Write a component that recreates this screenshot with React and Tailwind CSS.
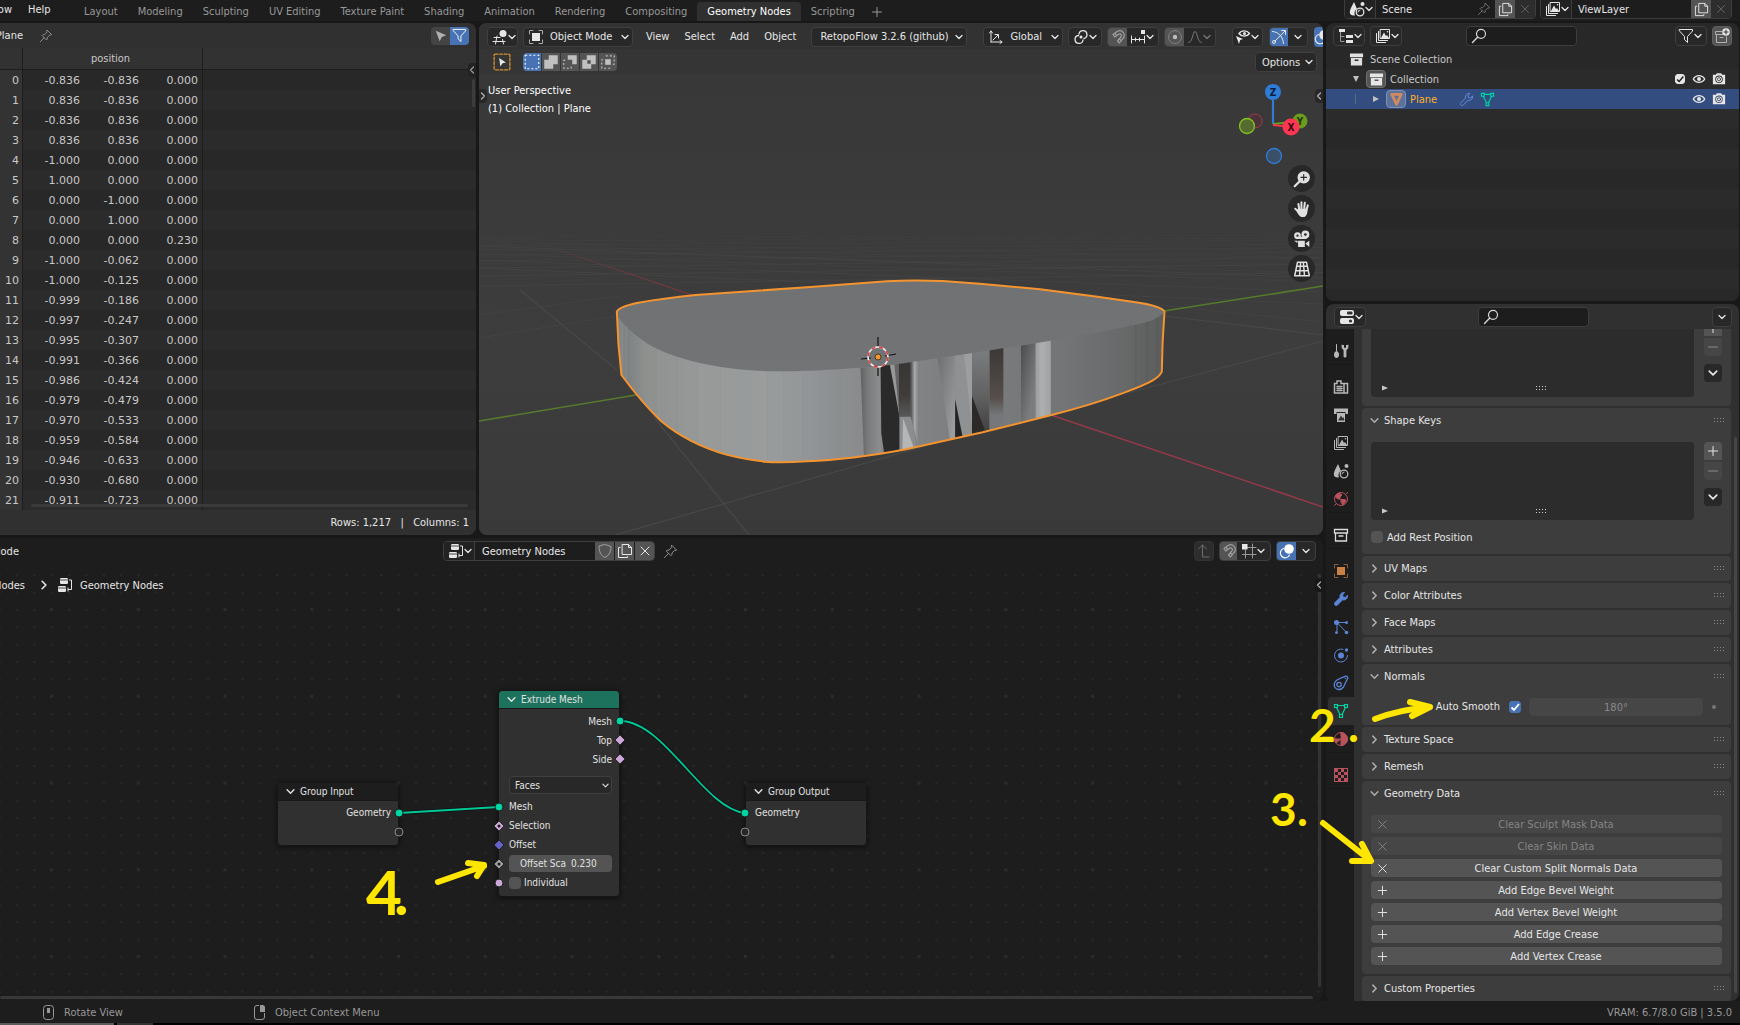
import React from "react";

const svgBase = {
  fill: "none",
  stroke: "currentColor",
  strokeLinecap: "round",
  strokeLinejoin: "round",
  viewBox: "0 0 16 16",
  "aria-hidden": true,
};

const Icon = ({ className = "h-4 w-4", children, ...rest }) => (
  <svg {...svgBase} {...rest} className={`shrink-0 ${className}`}>
    {children}
  </svg>
);

const Chevron = ({ className = "h-2 w-2" }) => (
  <svg {...svgBase} viewBox="0 0 8 8" strokeWidth="1.3" className={`shrink-0 ${className}`}>
    <path d="M1 2.5 4 5.5 7 2.5" />
  </svg>
);

const PinIcon = (props) => (
  <Icon {...props}>
    <path d="M9.5 1.5 14.5 6.5 13 7 12.5 6.8 9.5 9.5 9.5 11.5 8.5 12.5 3.5 7.5 4.5 6.5 6.5 6.5 9.2 3.5 9 3ZM6 10 1.5 14.5" />
  </Icon>
);

const FunnelIcon = (props) => (
  <Icon {...props}>
    <path d="M1.5 1.5H14.5V3L9.5 8.5V14.5L6.5 11.5V8.5L1.5 3Z" />
  </Icon>
);

const CopyIcon = (props) => (
  <Icon {...props} strokeLinejoin="miter">
    <path d="M5.5 1.5H11.5L14.5 4.5V11.5H5.5ZM11.5 1.5V4.5H14.5M3 4.5H1.5V14.5H10.5V13.5" />
  </Icon>
);

const CloseIcon = (props) => (
  <Icon {...props}>
    <path d="M4 4 12 12M12 4 4 12" />
  </Icon>
);

const PlusIcon = (props) => (
  <Icon {...props}>
    <path d="M8 3.5V12.5M3.5 8H12.5" />
  </Icon>
);

const MagnetIcon = (props) => (
  <Icon {...props} strokeWidth="1.2">
    <path d="M3 5.5 7.5 2.2C13 0 16.5 6.5 12.5 10L9.5 14 7.5 12 10.5 8.5C12.5 6 10.5 4 8.5 5.2L4.8 8ZM9.5 9.8 11.3 11.8M4.8 4.2 6.5 6.5" />
  </Icon>
);

const ImagesIcon = (props) => (
  <Icon {...props} strokeLinejoin="miter">
    <path d="M5.5 1.5H14.5V10.5H5.5ZM3.5 3.5V12.5H12.5M1.5 5.5V14.5H10.5" />
    <path d="M6 10 9 4.5 11 8 12 7 14 10Z" fill="currentColor" stroke="none" />
    <circle cx="12.5" cy="3.8" r=".8" fill="currentColor" stroke="none" />
  </Icon>
);

const SceneIcon = (props) => (
  <Icon {...props} stroke="none" fill="currentColor">
    <path d="M5 1C3.5 4 1 8 .8 11 .5 14 4 15 6 14.3 4.8 11.5 6 9 8 8Z" />
    <circle cx="13.5" cy="3" r="2" />
    <circle cx="11" cy="11" r="3.8" fill="none" stroke="currentColor" strokeWidth="1.3" />
    <path d="M9 11A2.2 2.2 0 0 1 11 9" fill="none" stroke="currentColor" />
  </Icon>
);

const BoxIcon = ({ solid, ...props }) =>
  solid ? (
    <Icon {...props} stroke="none" fill="currentColor">
      <path d="M1 1.5H15V5.5H1ZM2 6.5H14V14.5H2ZM6 8V9.5H10V8Z" fillRule="evenodd" />
    </Icon>
  ) : (
    <Icon {...props} strokeLinejoin="miter" strokeWidth="1.3">
      <path d="M1.5 2.5H14.5V6H1.5ZM2.5 6V14H13.5V6M6 9H10" />
    </Icon>
  );

const SearchIcon = (props) => (
  <Icon {...props}>
    <circle cx="10" cy="5.8" r="4.5" strokeWidth="1.2" />
    <path d="M6.8 9 1.5 14.5" strokeWidth="1.4" />
  </Icon>
);

const NodeTreeIcon = (props) => (
  <Icon {...props} stroke="none" fill="currentColor">
    <rect x="3" y="1" width="8" height="6" rx="1.2" />
    <rect x="1" y="9" width="8" height="6" rx="1.2" />
    <path d="M3 3H11M1 11H9" stroke="#222" strokeWidth=".8" />
    <path d="M12.5 3H14.5V12.5H11.5M11 11V14" fill="none" stroke="currentColor" />
  </Icon>
);

const MeshIcon = (props) => (
  <Icon {...props} strokeLinejoin="miter" strokeWidth="1.2">
    <path d="M1.5 1.5H4.5V4.5H1.5ZM11.5 1.5H14.5V4.5H11.5ZM6.5 11.5H9.5V14.5H6.5ZM4.5 2.5H11.5M3.5 4.5 7 11.5M12.5 4.5 9 11.5" />
  </Icon>
);

const WrenchIcon = ({ solid, ...props }) => (
  <Icon {...props} fill={solid ? "currentColor" : "none"}>
    <path d="M14.5 4.5C15 8 12 9.5 9.5 8.8L4.5 14C2.5 15.5 .5 13.5 2 11.5L7 6.5C6.5 3.5 8.5 1 11.5 1.5L9.5 4 10 6 12 6.5Z" />
  </Icon>
);

const EyeIcon = (props) => (
  <Icon {...props} strokeWidth="1.6">
    <path d="M1.5 8C4.5 2.8 11.5 2.8 14.5 8 11.5 13.2 4.5 13.2 1.5 8Z" />
    <circle cx="8" cy="8" r="2.3" fill="currentColor" stroke="none" />
  </Icon>
);

const CameraIcon = (props) => (
  <Icon {...props} stroke="none" fill="currentColor">
    <path
      fillRule="evenodd"
      d="M1 3H4.5L5.5 1.5H10.5L11.5 3H15V14H1ZM8 4A4.3 4.3 0 1 0 8 12.6 4.3 4.3 0 1 0 8 4Z"
    />
    <circle cx="8" cy="8.3" r="3.3" />
    <circle cx="8" cy="8.3" r="1.8" fill="none" stroke="#222" strokeWidth=".8" />
  </Icon>
);

const OverlayIcon = (props) => (
  <Icon {...props}>
    <circle cx="10" cy="6" r="4.8" fill="currentColor" stroke="none" />
    <path d="M4.5 5.5A4.8 4.8 0 1 0 10.5 12" strokeWidth="1.2" />
  </Icon>
);

const ObjectIcon = ({ frame = "currentColor", ...props }) => (
  <Icon {...props} strokeLinejoin="miter">
    <rect x="4" y="4" width="8" height="8" fill="currentColor" stroke="none" />
    <path d="M1.5 5V1.5H5M11 1.5H14.5V5M14.5 11V14.5H11M5 14.5H1.5V11" stroke={frame} />
  </Icon>
);

const Grip = ({ className = "text-[#999999]" }) => (
  <svg viewBox="0 0 11 5" className={`h-[5px] w-[11px] shrink-0 ${className}`} fill="currentColor" aria-hidden>
    {[0, 3, 6, 9].map((x) => (
      <React.Fragment key={x}>
        <rect x={x} y="0" width="1" height="1" />
        <rect x={x} y="3" width="1" height="1" />
      </React.Fragment>
    ))}
  </svg>
);

const boxClass = "flex h-5 shrink-0 items-center rounded border border-[#3f3f3f] bg-[#282828] text-[#e6e6e6]";

const MenuButton = ({ label, className = "w-8", children }) => (
  <button aria-label={label} className={`${boxClass} justify-between pr-1 pl-2 ${className}`}>
    {children}
    <Chevron />
  </button>
);

const Dropdown = ({ label, value, icon, className }) => (
  <div className={`${boxClass} pr-[3px] pl-1 ${className}`}>
    {icon}
    <select aria-label={label} className="min-w-0 flex-1 cursor-pointer appearance-none bg-transparent pl-[6px] outline-none">
      <option>{value}</option>
    </select>
    <Chevron />
  </div>
);

const SearchBox = ({ label }) => (
  <div className="flex h-5 w-[111px] items-center rounded border border-[#3d3d3d] bg-[#1d1d1d] pl-1 text-[#d6d6d6]">
    <SearchIcon />
    <input aria-label={label} className="min-w-0 flex-1 bg-transparent outline-none" />
  </div>
);

const Checkbox = ({ label, checked = false, id, className = "h-3 w-3 text-white" }) => (
  <span className={`relative flex rounded-sm ${className}`}>
    <input
      id={id}
      type="checkbox"
      defaultChecked={checked}
      aria-label={label}
      className="peer h-full w-full appearance-none rounded-sm bg-[#545454] checked:bg-inherit"
    />
    <svg viewBox="0 0 12 12" className="pointer-events-none absolute inset-0 hidden h-full w-full peer-checked:block" aria-hidden>
      <path d="M2.5 6.5 5 9 10 3" fill="none" stroke="currentColor" strokeWidth="1.8" />
    </svg>
  </span>
);

const TABS = [
  "Layout",
  "Modeling",
  "Sculpting",
  "UV Editing",
  "Texture Paint",
  "Shading",
  "Animation",
  "Rendering",
  "Compositing",
  "Geometry Nodes",
  "Scripting",
];

const DataBlock = ({ name, icon, pin }) => (
  <div className="flex h-5 w-48 overflow-hidden rounded-b border border-[#3d3d3d] text-[#e6e6e6]">
    <button aria-label={`Browse ${name}`} className="flex w-[31px] items-center justify-between border-r border-[#3d3d3d] bg-[#222222] pr-[2px] pl-1">
      {icon}
      <Chevron />
    </button>
    <input aria-label={name} defaultValue={name} className="min-w-0 flex-1 bg-transparent pl-[6px] outline-none" />
    {pin && <PinIcon className="mr-1 h-[14px] w-[14px] self-center text-[#777777]" />}
    <button aria-label={`New ${name}`} className="flex w-5 items-center justify-center bg-[#545454]">
      <CopyIcon className="h-[15px] w-[15px]" />
    </button>
    <button aria-label={`Remove ${name}`} className="flex w-5 items-center justify-center bg-[#2d2d2d] text-[#686868]">
      <CloseIcon className="h-[14px] w-[14px]" />
    </button>
  </div>
);

const TopBar = () => (
  <header className="flex h-[23px] shrink-0 items-start overflow-hidden border-b-2 border-[#181818] bg-[#1d1d1d] text-[#e6e6e6]">
    <div className="flex h-[18px] w-[12px] items-center justify-end overflow-hidden">
      <button>Window</button>
    </div>
    <button className="ml-4 h-[18px] w-[46px] text-left">Help</button>
    <nav className="flex pt-[2px] text-[#989898]">
      {TABS.map((tab) => (
        <button
          key={tab}
          className={
            tab === "Geometry Nodes"
              ? "h-[19px] rounded-t bg-[#303030] px-[10px] text-white"
              : "h-[19px] px-[10px]"
          }
        >
          {tab}
        </button>
      ))}
      <button aria-label="Add workspace" className="px-1">
        <PlusIcon />
      </button>
    </nav>
    <div className="-mt-px mr-2 ml-auto flex shrink-0 gap-1">
      <DataBlock name="Scene" icon={<SceneIcon />} pin />
      <DataBlock name="ViewLayer" icon={<ImagesIcon />} />
    </div>
  </header>
);

const ROWS = [
  ["-0.836", "-0.836", "0.000"],
  ["0.836", "-0.836", "0.000"],
  ["-0.836", "0.836", "0.000"],
  ["0.836", "0.836", "0.000"],
  ["-1.000", "0.000", "0.000"],
  ["1.000", "0.000", "0.000"],
  ["0.000", "-1.000", "0.000"],
  ["0.000", "1.000", "0.000"],
  ["0.000", "0.000", "0.230"],
  ["-1.000", "-0.062", "0.000"],
  ["-1.000", "-0.125", "0.000"],
  ["-0.999", "-0.186", "0.000"],
  ["-0.997", "-0.247", "0.000"],
  ["-0.995", "-0.307", "0.000"],
  ["-0.991", "-0.366", "0.000"],
  ["-0.986", "-0.424", "0.000"],
  ["-0.979", "-0.479", "0.000"],
  ["-0.970", "-0.533", "0.000"],
  ["-0.959", "-0.584", "0.000"],
  ["-0.946", "-0.633", "0.000"],
  ["-0.930", "-0.680", "0.000"],
  ["-0.911", "-0.723", "0.000"],
];

const Spreadsheet = () => (
  <section className="relative flex w-[476px] shrink-0 flex-col overflow-hidden rounded-r-lg bg-[#282828] text-[#c8c8c8]">
    <div className="flex h-[25px] shrink-0 items-center bg-[#303030] pr-[7px]">
      <div className="flex w-[23px] justify-end overflow-hidden text-[#e6e6e6]">
        <span>Plane</span>
      </div>
      <PinIcon className="ml-4 h-[14px] w-[14px] text-[#999999]" />
      <div className="ml-auto flex overflow-hidden rounded">
        <button aria-label="Show only selected" className="flex h-[18px] w-[19px] items-center justify-center bg-[#444444] text-[#b0b0b0]">
          <Icon className="h-[14px] w-[14px]">
            <path d="M2 2 14 7 9 9 6.5 14Z" fill="currentColor" stroke="none" />
          </Icon>
        </button>
        <button aria-label="Use filter" className="flex h-[18px] w-[19px] items-center justify-center bg-[#4772b3] text-white">
          <FunnelIcon className="h-[15px] w-[15px]" />
        </button>
      </div>
    </div>
    <div className="min-h-0 flex-1 overflow-hidden">
      <table className="w-full table-fixed border-separate border-spacing-0">
        <colgroup>
          <col className="w-[23px]" />
          <col className="w-[62px]" />
          <col className="w-[59px]" />
          <col className="w-[59px]" />
          <col />
        </colgroup>
        <thead>
          <tr className="h-[22px] bg-[#323232]">
            <th className="border-r border-b border-[#1d1d1d] p-0" />
            <th colSpan={3} className="border-r border-b border-[#1d1d1d] p-0 pr-1 font-normal">
              position
            </th>
            <th className="border-b border-[#1d1d1d] p-0" />
          </tr>
        </thead>
        <tbody className="text-right font-['DejaVu_Sans',sans-serif]">
          {ROWS.map((row, i) => (
            <tr key={i} className="h-5 even:bg-[#2b2b2b]">
              <td className="border-r border-[#1d1d1d] bg-[#333333] pt-px pr-[3px]">{i}</td>
              <td className="pt-px pr-[5px]">{row[0]}</td>
              <td className="pt-px pr-[5px]">{row[1]}</td>
              <td className="border-r border-[#1d1d1d] pt-px pr-1">{row[2]}</td>
              <td />
            </tr>
          ))}
        </tbody>
      </table>
    </div>
    <div className="flex h-[25px] shrink-0 items-center justify-end bg-[#303030] pr-[7px] whitespace-pre text-[#e6e6e6]">
      Rows: 1,217   |   Columns: 1
    </div>
    <div className="absolute right-2 bottom-7 left-[31px] h-[3px] rounded bg-[#3a3a3a]" />
    <div className="absolute top-14 right-[1px] h-7 w-[3px] rounded bg-[#3c3c3c]" />
    <button aria-label="Show region" className="absolute top-10 right-0 flex h-[14px] w-2 items-center justify-center rounded-l bg-[#222222] text-[#999999]">
      <Chevron className="h-2 w-2 rotate-90" />
    </button>
  </section>
);

const OUTLINE =
  "M44 155C48 142 70 135 100 128 150 118 200 111 250 105L400 93 550 81 750 64C790 61 850 61 895 63L1000 72 1150 88 1300 110 1400 127C1440 134 1470 144 1475 155L1470 250 1468 335C1460 355 1440 368 1370 398 1310 424 1240 448 1180 465L1000 517 800 568C740 581 640 600 540 604 500 607 460 608 430 605 395 601 360 593 330 584 250 558 200 522 160 484 120 440 85 390 56 345L48 250Z";
const SIDE =
  "M44 168C70 205 100 235 140 262 180 285 240 308 320 322 370 330 410 333 450 334 520 335 600 331 730 319 800 310 900 293 1100 257L1250 228C1330 212 1400 195 1440 182 1460 172 1470 162 1475 155L1475 640H40Z";

const HORIZON = [233, 236, 239, 242, 246, 250, 255, 261, 268, 277];

const Scene3D = () => (
  <svg
    viewBox="479 23 844 512"
    preserveAspectRatio="xMidYMid slice"
    className="absolute inset-0 h-full w-full"
    aria-hidden
  >
    <defs>
      <linearGradient id="top" x1="0" y1="0" x2="0" y2="1">
        <stop offset="0" stopColor="#6f7172" />
        <stop offset="1" stopColor="#747677" />
      </linearGradient>
      <linearGradient id="side" gradientUnits="userSpaceOnUse" x1="44" y1="0" x2="1475" y2="0">
        <stop offset="0" stopColor="#858888" />
        <stop offset=".02" stopColor="#7f8282" />
        <stop offset=".05" stopColor="#8d908e" />
        <stop offset=".15" stopColor="#979a99" />
        <stop offset=".27" stopColor="#9a9d9c" />
        <stop offset=".34" stopColor="#949698" />
        <stop offset=".44" stopColor="#898b8d" />
        <stop offset=".6" stopColor="#7d7f81" />
        <stop offset=".82" stopColor="#737476" />
        <stop offset=".93" stopColor="#676868" />
        <stop offset="1" stopColor="#5c5d5d" />
      </linearGradient>
      <linearGradient id="f1">
        <stop offset="0" stopColor="#5f6060" />
        <stop offset=".4" stopColor="#7b7c7c" />
        <stop offset="1" stopColor="#8c8e90" />
      </linearGradient>
      <linearGradient id="f2" x1="0" y1="0" x2="0" y2="1">
        <stop offset="0" stopColor="#383634" />
        <stop offset=".6" stopColor="#3f3c3a" />
        <stop offset="1" stopColor="#5a5a5a" />
      </linearGradient>
      <linearGradient id="f3">
        <stop offset="0" stopColor="#4c4c4c" />
        <stop offset=".5" stopColor="#a8a9ab" />
        <stop offset="1" stopColor="#808284" />
      </linearGradient>
      <linearGradient id="f4" x1="0" y1="0" x2="0" y2="1">
        <stop offset="0" stopColor="#7c7e80" />
        <stop offset=".5" stopColor="#626363" />
        <stop offset="1" stopColor="#3c3938" />
      </linearGradient>
      <linearGradient id="f5" x1="0" y1="0" x2="0" y2="1">
        <stop offset="0" stopColor="#3a3633" />
        <stop offset=".6" stopColor="#554e4b" />
        <stop offset=".8" stopColor="#75777a" />
      </linearGradient>
      <linearGradient id="f6">
        <stop offset="0" stopColor="#9a9c9e" />
        <stop offset=".4" stopColor="#adafb1" />
        <stop offset="1" stopColor="#9fa1a3" />
      </linearGradient>
      <linearGradient id="f7" x1="0" y1="0" x2="1" y2="1">
        <stop offset="0" stopColor="#6b6d6f" />
        <stop offset=".6" stopColor="#8b8d8f" />
        <stop offset="1" stopColor="#a2a4a6" />
      </linearGradient>
      <linearGradient id="f8" x1="0" y1="0" x2=".8" y2="1">
        <stop offset="0" stopColor="#484949" />
        <stop offset=".8" stopColor="#7a7c7e" />
      </linearGradient>
      <linearGradient id="fade" gradientUnits="userSpaceOnUse" x1="530" y1="0" x2="692" y2="0">
        <stop offset="0" stopColor="#83363f" stopOpacity="0" />
        <stop offset="1" stopColor="#83363f" />
      </linearGradient>
      <linearGradient id="sky" x1="0" y1="0" x2="0" y2="1">
        <stop offset="0" stopColor="#373737" />
        <stop offset=".5" stopColor="#3d3d3d" />
        <stop offset="1" stopColor="#363636" />
      </linearGradient>
      <clipPath id="body">
        <path d={OUTLINE} />
      </clipPath>
      <clipPath id="wall">
        <path d={SIDE} />
      </clipPath>
    </defs>
    <rect x="0" y="0" width="1900" height="700" fill="url(#sky)" />
    <g stroke="#484848" fill="none">
      {HORIZON.map((y, i) => (
        <path key={y} d={`M479 ${y + i}L1323 ${y - i / 2}`} opacity={0.15 + i * 0.05} />
      ))}
      {HORIZON.map((y, i) => (
        <path key={y} d={`M479 ${y - i}L1323 ${y + i * 3}`} opacity={0.1 + i * 0.05} />
      ))}
      <path d="M479 315 620 296M479 338 640 312M479 246 1323 278M1110 300 1323 322" opacity=".6" />
      <path d="M520 290 617 370M653 416 749 535M615 535 925 446M1128 393 1323 341M1164 316 1323 335" strokeWidth="1.2" />
    </g>
    <path d="M530 240 692 295" stroke="url(#fade)" strokeWidth="1.2" />
    <path d="M1051 415 1323 507" stroke="#93394a" strokeWidth="1.6" />
    <path d="M479 421 636 395M1164 311 1323 286" stroke="#567a2c" strokeWidth="1.6" />

    <g transform="translate(600 260) scale(.3827 .3333)">
      <g clipPath="url(#body)">
        <rect width="1568" height="660" fill="url(#top)" />
        <g clipPath="url(#wall)">
          <rect width="1568" height="660" fill="url(#side)" />
          <path d="M58 150V400M69 150V400M155 250V520" stroke="#a0a3a2" strokeWidth="3" opacity=".3" />
          <path d="M200 250V600M255 250V600M315 250V600M438 250V620M480 250V620M530 250V620M576 250V620M630 250V620" stroke="#868889" strokeWidth="1.5" opacity=".35" />
          <path d="M680 300H733V600H690Z" fill="url(#f1)" />
          <path d="M733 300H783V600H745L735 520Z" fill="#2a2a2a" />
          <path d="M755 300H781L782 465Z" fill="#96989a" />
          <path d="M768 300H781L782 465Z" fill="#636465" />
          <path d="M781 300H812V475H781Z" fill="url(#f2)" />
          <path d="M783 470H814L832 600H783Z" fill="#8b8d8f" />
          <path d="M792 475 822 570H790Z" fill="#b4b6b8" />
          <path d="M812 300H832V560L812 470Z" fill="url(#f3)" />
          <path d="M880 280H928V560L915 545Z" fill="url(#f7)" />
          <path d="M928 270H972V540H928Z" fill="#8f9193" />
          <path d="M950 270H972V500Z" fill="#9c9ea0" />
          <path d="M928 418 950 545H928Z" fill="#242424" />
          <path d="M972 260H1018V540H972Z" fill="url(#f4)" />
          <path d="M972 408 1012 530H972Z" fill="#2c2a29" />
          <path d="M1018 250H1054V520H1018Z" fill="url(#f5)" />
          <path d="M1100 230H1138V500H1100Z" fill="url(#f8)" />
          <path d="M1138 230H1178V490H1138Z" fill="url(#f6)" />
          <path d="M1400 150V420M1430 150V420M1455 150V420" stroke="#4f5050" strokeWidth="4" opacity=".3" />
        </g>
      </g>
      <path d={OUTLINE} fill="none" stroke="#f49430" strokeWidth="2" vectorEffect="non-scaling-stroke" />
    </g>

    <path d="M878 337V347M878 367V376M861 359 871 358M885 356 896 354" stroke="#111" strokeWidth="1.2" />
    <circle cx="878" cy="357" r="10" fill="none" stroke="#f2f2f2" strokeWidth="1.5" />
    <circle cx="878" cy="357" r="10" fill="none" stroke="#d9363e" strokeWidth="1.5" strokeDasharray="4 4" />
    <circle cx="878" cy="357" r="3" fill="#f49430" stroke="#3a2a10" strokeWidth=".8" />
  </svg>
);

const AxisGizmo = () => (
  <svg viewBox="0 0 72 84" className="h-[84px] w-[72px] font-bold" fontSize="10" textAnchor="middle" aria-hidden>
    <path d="M36 16V40" stroke="#2f7cd8" strokeWidth="2.2" />
    <path d="M36 40 56 38" stroke="#6b9c1b" strokeWidth="2" />
    <path d="M36 41 54 43" stroke="#f2364f" strokeWidth="2" />
    <circle cx="18" cy="37" r="7" fill="#4a3338" stroke="#a03a4c" />
    <circle cx="10" cy="42" r="7.5" fill="#556b2f" stroke="#83c21d" strokeWidth="1.3" />
    <circle cx="63" cy="37" r="7.5" fill="#6b9c1b" />
    <text x="63" y="41" fill="#26380a">Y</text>
    <circle cx="54" cy="43" r="8.5" fill="#ff3653" />
    <text x="54" y="47" fill="#3a0a12">X</text>
    <circle cx="36" cy="8" r="8" fill="#2f7cd8" />
    <text x="36" y="12" fill="#0c2138">Z</text>
    <circle cx="37" cy="72" r="7.5" fill="#395068" stroke="#2f7cd8" strokeWidth="1.3" />
  </svg>
);

const NavButton = ({ label, children }) => (
  <button aria-label={label} className="flex h-[27px] w-[27px] items-center justify-center rounded-full bg-[#282828] text-[#e0e0e0]">
    {children}
  </button>
);

const Viewport = () => (
  <section className="relative min-w-0 flex-1 overflow-hidden rounded-lg bg-[#3a3a3a] text-[#e6e6e6]">
    <Scene3D />
    <div className="relative flex h-[26px] items-center overflow-hidden bg-[#303030]/70 pt-px pl-2">
      <MenuButton label="Editor type" className="w-[31px] !pl-1">
        <Icon>
          <path d="M2 8.5H8M1 12.5H13M5 7 3.5 15M10.5 10.5 11.5 15" />
          <circle cx="11" cy="4.5" r="3.5" fill="currentColor" stroke="none" />
        </Icon>
      </MenuButton>
      <Dropdown label="Mode" value="Object Mode" icon={<ObjectIcon frame="#aaaaaa" />} className="ml-[5px] w-[110px]" />
      <nav className="ml-[13px] flex gap-[15px]">
        <button>View</button>
        <button>Select</button>
        <button>Add</button>
        <button>Object</button>
      </nav>
      <Dropdown label="RetopoFlow" value="RetopoFlow 3.2.6 (github)" className="ml-[15px] w-[156px] !pl-[2px]" />
      <Dropdown
        label="Transform orientation"
        value="Global"
        className="ml-4 w-20"
        icon={
          <Icon>
            <path d="M3 13V2M1.5 4 3 2 4.5 4M3 13H14M12 11.5 14 13 12 14.5M5 11 10 6M7 5.5H10.5V9" />
          </Icon>
        }
      />
      <MenuButton label="Pivot point" className="ml-[5px] !pl-1">
        <Icon>
          <circle cx="8" cy="8" r="1.5" fill="currentColor" stroke="none" />
          <path d="M6 5A4 4 0 1 1 11 9.5M5.5 6.5A4 4 0 1 0 10 11" strokeWidth="1.3" />
        </Icon>
      </MenuButton>
      <div className={`${boxClass} ml-[5px] w-[52px] overflow-hidden`}>
        <button aria-label="Snap" className="flex h-full w-[19px] items-center justify-center bg-[#545454] text-[#a0a0a0]">
          <MagnetIcon />
        </button>
        <button aria-label="Snapping" className="flex flex-1 items-center justify-between pr-1 pl-[3px]">
          <Icon className="h-4 w-4">
            <path d="M1.5 7V14M14.5 7V14M5.5 9V12M9.5 9V12M1.5 10.5H14.5" />
            <rect x="11" y="1" width="4" height="4" fill="currentColor" stroke="none" />
          </Icon>
          <Chevron />
        </button>
      </div>
      <div className={`${boxClass} ml-[5px] w-[52px] overflow-hidden text-[#808080]`}>
        <button aria-label="Proportional editing" className="flex h-full w-[19px] items-center justify-center bg-[#545454]">
          <Icon>
            <circle cx="8" cy="8" r="6.5" stroke="#808080" />
            <circle cx="8" cy="8" r="2.2" fill="#bbbbbb" stroke="none" />
          </Icon>
        </button>
        <button aria-label="Falloff" className="flex flex-1 items-center justify-between pr-1 pl-[3px] text-[#777777]">
          <Icon>
            <path d="M1.5 13.5C6 13.5 5.5 2.5 8 2.5S10 13.5 14.5 13.5" />
          </Icon>
          <Chevron />
        </button>
      </div>
      <div className="min-w-0 flex-1" />
      <MenuButton label="Visibility" className="w-[31px] !pl-[2px]">
        <Icon>
          <path d="M4 4.5C6.5 1 12 1 14.5 4.5 12 8 6.5 8 4 4.5Z" strokeWidth="1.4" />
          <circle cx="9.5" cy="4.5" r="1.5" fill="currentColor" stroke="none" />
          <path d="M1 7 8 10 5.2 11 4 15Z" fill="currentColor" stroke="none" />
        </Icon>
      </MenuButton>
      <div className={`${boxClass} ml-[6px] w-[39px] overflow-hidden`}>
        <button aria-label="Show gizmo" className="flex h-full w-[18px] items-center justify-center bg-[#4772b3]">
          <Icon>
            <path d="M1.5 2.5C8 3 12 8 12.5 14.5M3 13 14 2M10.5 1.5H14.5V5.5" />
            <circle cx="3" cy="13" r="1.5" fill="#4772b3" />
          </Icon>
        </button>
        <button aria-label="Gizmos" className="flex flex-1 justify-center">
          <Chevron />
        </button>
      </div>
      <button aria-label="Show overlays" className="ml-[6px] flex h-5 w-[9px] shrink-0 items-center overflow-hidden rounded-l bg-[#4772b3]">
        <OverlayIcon />
      </button>
    </div>
    <div className="relative flex h-[26px] items-center bg-[#303030]/30 pr-[6px] pl-[14px]">
      <button aria-label="Select tool">
        <Icon className="h-[18px] w-[18px]">
          <rect x="1" y="1" width="14" height="14" rx="1" stroke="#d09030" strokeWidth="1.2" strokeDasharray="2.5 1.5" />
          <path d="M5.5 4.5 11.5 8.5 8.5 9.2 6.5 12Z" fill="currentColor" stroke="none" />
        </Icon>
      </button>
      <div className="ml-3 flex gap-px overflow-hidden rounded text-[#c0c0c0]">
        <button aria-label="Set" className="flex h-[18px] w-[18px] items-center justify-center bg-[#4772b3]">
          <Icon className="h-[18px] w-[18px]">
            <rect x="2" y="2" width="12" height="12" stroke="#fff" strokeDasharray="1.8 1.8" strokeLinecap="butt" />
          </Icon>
        </button>
        <button aria-label="Extend" className="bg-[#545454]">
          <Icon className="h-[18px] w-[18px]" fill="currentColor" stroke="none">
            <path d="M6 2H14V10H10V14H2V6H6Z" />
          </Icon>
        </button>
        <button aria-label="Subtract" className="bg-[#545454]">
          <Icon className="h-[18px] w-[18px]">
            <path d="M6 2H14V10H10V6H6Z" fill="currentColor" stroke="none" />
            <path d="M9 12V13.5H2.5V6.5H4" strokeDasharray="1.8 1.8" strokeLinecap="butt" />
          </Icon>
        </button>
        <button aria-label="Invert" className="bg-[#545454]">
          <Icon className="h-[18px] w-[18px]" fill="currentColor" stroke="none">
            <path fillRule="evenodd" d="M6 2H14V10H10V14H2V6H6ZM6.5 6.5V9.5H9.5V6.5Z" />
          </Icon>
        </button>
        <button aria-label="Intersect" className="bg-[#545454]">
          <Icon className="h-[18px] w-[18px]">
            <rect x="5.5" y="5.5" width="5" height="5" fill="currentColor" stroke="none" />
            <path d="M6 2.5H13.5V10H12M10 13.5H2.5V6H4" strokeDasharray="1.8 1.8" strokeLinecap="butt" />
          </Icon>
        </button>
      </div>
      <Dropdown label="Options" value="Options" className="ml-auto w-[62px] !pl-0" />
    </div>
    <div className="relative pt-[7px] pl-[9px] text-white">
      <p className="h-[18px]">User Perspective</p>
      <p className="h-[18px]">(1) Collection | Plane</p>
    </div>
    <div className="absolute top-[61px] right-[14px]">
      <AxisGizmo />
    </div>
    <div className="absolute top-[142px] right-2 flex flex-col gap-[3px]">
      <NavButton label="Zoom">
        <Icon className="h-[18px] w-[18px]">
          <circle cx="9.5" cy="6.5" r="5.5" fill="currentColor" stroke="none" />
          <path d="M5.5 10.5 1.5 14.5" strokeWidth="2" />
          <path d="M9.5 4V9M7 6.5H12" stroke="#282828" />
        </Icon>
      </NavButton>
      <NavButton label="Pan">
        <Icon className="h-[18px] w-[18px]">
          <path d="M5.5 8 4.8 3.5M7.5 7V2M10 7 10.5 2.5M12 8.5 13.2 4.8M5 10.5 2 7.8" strokeWidth="1.8" />
          <path d="M4.5 7.5H13C13 11 12.5 15 9 15.2 6 15.4 4.5 12.5 3 9.5Z" fill="currentColor" stroke="none" />
        </Icon>
      </NavButton>
      <NavButton label="Camera view">
        <Icon className="h-[18px] w-[18px]" stroke="none" fill="currentColor">
          <circle cx="4" cy="5" r="3" />
          <circle cx="11" cy="4" r="3.5" />
          <path d="M3 6H12V8H3ZM4.5 9.5H10.5V15H4.5ZM11 12 14.5 9.5V15ZM1 9.5H4V11.5Z" />
          <circle cx="4" cy="5" r="1" fill="#282828" />
          <circle cx="11" cy="4" r="1.2" fill="#282828" />
        </Icon>
      </NavButton>
      <NavButton label="Perspective">
        <Icon className="h-[18px] w-[18px]" strokeWidth="1.3">
          <path d="M4 2H12L14.5 14H1.5ZM3.3 5.5H12.7M2.5 9.5H13.5M6.8 2 5.8 14M9.2 2 10.2 14" />
        </Icon>
      </NavButton>
    </div>
    <button aria-label="Show sidebar" className="absolute top-[66px] right-0 flex h-[14px] w-2 items-center justify-center rounded-l bg-[#282828] text-[#b0b0b0]">
      <Chevron className="h-2 w-2 rotate-90" />
    </button>
    <button aria-label="Show toolbar" className="absolute top-[66px] left-0 flex h-[14px] w-2 items-center justify-center rounded-r bg-[#282828] text-[#b0b0b0]">
      <Chevron className="h-2 w-2 -rotate-90" />
    </button>
  </section>
);

const NodeHeader = ({ title, className = "bg-[#1d1d1d]" }) => (
  <div className={`flex h-[18px] items-center gap-[5px] rounded-t border-b border-[#181818] pl-2 leading-4 ${className}`}>
    <Chevron className="h-[9px] w-[9px]" />
    {title}
  </div>
);

const nodeClass =
  "absolute w-[122px] rounded bg-[#303030] text-[10px] text-[#e0e0e0] shadow-[0_1px_5px_rgba(0,0,0,.6)] border border-[#161616]";

const Socket = ({ x, y, shape = "circle", color, hollow }) =>
  shape === "circle" ? (
    <circle cx={x} cy={y} r="4" fill={hollow ? "#262626" : color} stroke={hollow ? color : "#16201c"} />
  ) : (
    <g>
      <path d={`M${x} ${y - 5}L${x + 5} ${y}L${x} ${y + 5}L${x - 5} ${y}Z`} fill={color} stroke="#181818" strokeWidth=".8" />
      {hollow && <circle cx={x} cy={y} r="1.5" fill="#181818" />}
    </g>
  );

const NodeCanvas = () => (
  <>
    <svg className="absolute inset-0 h-full w-full" aria-hidden>
      <defs>
        <pattern id="dots" x="7" y="1.5" width="17.35" height="17.35" patternUnits="userSpaceOnUse">
          <rect x="9" y="0" width="2" height="2" fill="#292929" />
        </pattern>
        <pattern id="majorDots" x="50" y="69" width="86.75" height="86.75" patternUnits="userSpaceOnUse">
          <rect x="0" y="1" width="3" height="3" fill="#2b2b2b" />
        </pattern>
      </defs>
      <rect y="30" width="100%" height="100%" fill="url(#dots)" />
      <rect y="30" width="100%" height="100%" fill="url(#majorDots)" />
    </svg>
    <div className={`${nodeClass} top-[244px] left-[277px] h-[64px]`}>
      <NodeHeader title="Group Input" />
      <p className="pt-1 pr-[7px] text-right leading-4">Geometry</p>
    </div>
    <div className={`${nodeClass} top-[152px] left-[498px] h-[207px]`}>
      <NodeHeader title="Extrude Mesh" className="bg-[#1d725e]" />
      <div className="flex flex-col pt-[3px] pr-[7px] pl-[10px] leading-[19px]">
        <p className="text-right">Mesh</p>
        <p className="text-right">Top</p>
        <p className="text-right">Side</p>
        <div className="mt-[7px] mb-[3px] flex h-[18px] items-center rounded border border-[#3f3f3f] bg-[#282828] pr-[2px] pl-[5px]">
          <select aria-label="Extrude mode" className="min-w-0 flex-1 appearance-none bg-transparent outline-none">
            <option>Faces</option>
          </select>
          <Chevron className="h-[7px] w-[7px]" />
        </div>
        <p>Mesh</p>
        <p>Selection</p>
        <p>Offset</p>
        <div className="my-px flex h-[17px] items-center justify-center gap-[5px] rounded bg-[#545454]">
          <label htmlFor="offset-scale">Offset Sca</label>
          <input id="offset-scale" defaultValue="0.230" className="w-[30px] bg-transparent outline-none" />
        </div>
        <label className="flex items-center gap-[3px]">
          <input type="checkbox" className="h-3 w-3 appearance-none rounded-sm bg-[#545454]" />
          Individual
        </label>
      </div>
    </div>
    <div className={`${nodeClass} top-[244px] left-[745px] h-[64px]`}>
      <NodeHeader title="Group Output" />
      <p className="pt-1 pl-[9px] leading-4">Geometry</p>
    </div>
    <svg className="pointer-events-none absolute inset-0 h-full w-full" aria-hidden>
      <g fill="none">
        <path d="M399 275 499 269M621 183C665 184 704 271 745 275" stroke="#101010" strokeWidth="3.5" />
        <path d="M399 275 499 269M621 183C665 184 704 271 745 275" stroke="#00c896" strokeWidth="1.8" />
      </g>
      <Socket x={399} y={275} color="#00d6a3" />
      <Socket x={399} y={294} color="#8a8a8a" hollow />
      <Socket x={745} y={275} color="#00d6a3" />
      <Socket x={745} y={294} color="#8a8a8a" hollow />
      <Socket x={620} y={183} color="#00d6a3" />
      <Socket x={620} y={202} shape="diamond" color="#cca6d6" />
      <Socket x={620} y={221} shape="diamond" color="#cca6d6" />
      <Socket x={499} y={269} color="#00d6a3" />
      <Socket x={499} y={288} shape="diamond" color="#cca6d6" hollow />
      <Socket x={499} y={307} shape="diamond" color="#6363c7" />
      <Socket x={499} y={326} shape="diamond" color="#a1a1a1" hollow />
      <Socket x={499} y={345} color="#cca6d6" />
      <path
        d="M438 344 484 328M468 325 484 327 477 338"
        fill="none"
        stroke="#ffe600"
        strokeWidth="6"
        strokeLinecap="round"
        strokeLinejoin="round"
      />
      <text x="366" y="377" fontSize="62" fill="#ffe600" className="font-['Lato',sans-serif] font-bold">
        4<tspan x="394">.</tspan>
      </text>
    </svg>
  </>
);

const NodeEditor = () => (
  <section className="relative flex min-h-0 flex-[463] flex-col overflow-hidden rounded-r-lg bg-[#1d1d1d] text-[#e6e6e6]">
    <NodeCanvas />
    <div className="relative flex h-[26px] items-center pr-[7px]">
      <div className="flex w-[19px] justify-end overflow-hidden">
        <button>Node</button>
      </div>
      <div className="flex flex-1 items-center pl-[424px]">
        <div className={`${boxClass} w-[212px] overflow-hidden !bg-[#1d1d1d]`}>
          <button aria-label="Browse node tree" className="flex h-full w-[31px] items-center justify-between border-r border-[#3f3f3f] bg-[#222222] pr-[2px] pl-1">
            <NodeTreeIcon />
            <Chevron />
          </button>
          <input aria-label="Node tree name" defaultValue="Geometry Nodes" className="min-w-0 flex-1 bg-transparent pl-[7px] outline-none" />
          <div className="flex h-full gap-px">
            <button aria-label="Fake user" className="flex w-[19px] items-center justify-center bg-[#545454] text-[#a0a0a0]">
              <Icon>
                <path d="M8 1.5 14 3.5C14 9 12 12.5 8 14.5 4 12.5 2 9 2 3.5Z" />
              </Icon>
            </button>
            <button aria-label="Duplicate" className="flex w-[19px] items-center justify-center bg-[#545454]">
              <CopyIcon />
            </button>
            <button aria-label="Unlink" className="flex w-[19px] items-center justify-center bg-[#545454]">
              <CloseIcon />
            </button>
          </div>
        </div>
        <PinIcon className="ml-2 h-[15px] w-[15px] text-[#999999]" />
      </div>
      <button aria-label="Parent node tree" className="flex h-5 w-5 items-center justify-center rounded border border-[#333333] bg-[#2d2d2d] text-[#6c6c6c]">
        <Icon>
          <path d="M6.5 2V14H13M2.5 6 6.5 2 10.5 6" />
        </Icon>
      </button>
      <div className={`${boxClass} ml-[5px] w-[52px] overflow-hidden`}>
        <button aria-label="Snap" className="flex h-full w-[19px] items-center justify-center bg-[#545454] text-[#a0a0a0]">
          <MagnetIcon />
        </button>
        <button aria-label="Snap to" className="flex flex-1 items-center justify-between pr-[5px] pl-1">
          <Icon>
            <path d="M6 4.5H15M1.5 11.5H15M4.5 7V15M11.5 1V15" stroke="#999999" />
            <rect x="1" y="1" width="5.5" height="5.5" fill="currentColor" stroke="none" />
          </Icon>
          <Chevron />
        </button>
      </div>
      <div className={`${boxClass} ml-[5px] w-[40px] overflow-hidden`}>
        <button aria-label="Overlays" className="flex h-full w-[19px] items-center justify-center bg-[#4772b3] text-white">
          <OverlayIcon />
        </button>
        <button aria-label="Overlay options" className="flex flex-1 justify-center">
          <Chevron />
        </button>
      </div>
    </div>
    <div className="relative mt-[11px] flex h-5 items-center">
      <div className="flex w-[25px] justify-end overflow-hidden">
        <span>Nodes</span>
      </div>
      <Chevron className="mr-2 ml-[14px] h-[10px] w-[10px] -rotate-90" />
      <NodeTreeIcon className="mr-[7px] h-4 w-4" />
      <span>Geometry Nodes</span>
    </div>
    <div className="absolute top-9 right-[2px] bottom-[14px] w-[3px] rounded bg-[#333333]" />
    <div className="absolute right-[10px] bottom-[2px] left-0 h-[3px] rounded bg-[#383838]" />
    <button aria-label="Show sidebar" className="absolute top-10 right-0 flex h-[14px] w-2 items-center justify-center rounded-l bg-[#181818] text-[#b0b0b0]">
      <Chevron className="h-2 w-2 rotate-90" />
    </button>
  </section>
);

const Outliner = () => (
  <section className="flex h-[278px] shrink-0 flex-col overflow-hidden rounded-lg bg-[#282828] text-[#c8c8c8]">
    <div className="flex h-[26px] shrink-0 items-center pr-[7px] pl-[7px]">
      <MenuButton label="Editor type" className="w-8 !pl-1">
        <Icon>
          <path d="M2.5 4V13.5H6M2.5 8.5H6" stroke="#999999" />
          <path d="M1 1H7V4H1ZM8 7H15V10H8ZM8 12H15V15H8Z" fill="currentColor" stroke="none" />
        </Icon>
      </MenuButton>
      <MenuButton label="Display mode" className="ml-[5px] w-8 !pl-1">
        <ImagesIcon />
      </MenuButton>
      <div className="flex flex-1 justify-center pr-[34px]">
        <SearchBox label="Search outliner" />
      </div>
      <MenuButton label="Filter" className="w-8 !pl-[2px]">
        <FunnelIcon />
      </MenuButton>
      <button aria-label="New collection" className="ml-[5px] flex h-5 w-5 items-center justify-center rounded border border-[#606060] bg-[#545454] text-[#b0b0b0]">
        <Icon>
          <path d="M8 3.5H1.5V6.5H9M2.5 6.5V14.5H12.5V9M6 9.5H9" />
          <circle cx="12" cy="4" r="3.8" fill="#e6e6e6" stroke="none" />
          <path d="M12 2V6M10 4H14" stroke="#333" />
        </Icon>
      </button>
    </div>
    <ul className="flex-1 overflow-hidden bg-[repeating-linear-gradient(#282828_0_20px,#2b2b2b_20px_40px)]">
      <li className="flex h-5 items-center pl-[23px]">
        <BoxIcon solid className="mr-[6px] h-[15px] w-[15px] text-[#e0e0e0]" />
        Scene Collection
      </li>
      <li className="flex h-5 items-center pr-[13px] pl-[26px]">
        <svg viewBox="0 0 8 8" className="h-2 w-2" aria-hidden>
          <path d="M1 1H7L4 7Z" fill="#c0c0c0" />
        </svg>
        <span className="mr-1 ml-[6px] flex h-[18px] w-5 items-center justify-center rounded border border-[#707070] bg-[#545454]">
          <BoxIcon solid className="h-[15px] w-[15px] text-[#e6e6e6]" />
        </span>
        Collection
        <span className="ml-auto flex items-center gap-[6px] text-[#e6e6e6]">
          <Checkbox label="Include collection" checked className="mr-px h-[10px] w-[10px] bg-[#e6e6e6] text-[#222222]" />
          <button aria-label="Hide Collection">
            <EyeIcon className="h-[14px] w-[14px]" />
          </button>
          <button aria-label="Disable Collection in renders">
            <CameraIcon className="h-[14px] w-[14px]" />
          </button>
        </span>
      </li>
      <li className="flex h-5 items-center bg-[#334d80] pr-[13px] pl-[29px]">
        <span className="h-[10px] w-px bg-[#5a6a80]" />
        <svg viewBox="0 0 8 8" className="ml-4 h-2 w-2" aria-hidden>
          <path d="M1 1V7L7 4Z" fill="#c0c0c0" />
        </svg>
        <span className="mr-1 ml-[6px] flex h-[18px] w-5 items-center justify-center rounded border border-[#8090b0] bg-[#5c719b] text-[#d08a5c]">
          <Icon className="h-[15px] w-[15px]" strokeWidth="3">
            <path d="M3 2.5H13L8 13Z" />
          </Icon>
        </span>
        <span className="text-[#ffaf29]">Plane</span>
        <WrenchIcon className="mr-[6px] ml-[22px] h-[15px] w-[15px] text-[#6a8fe0]" />
        <MeshIcon className="h-[15px] w-[15px] text-[#00d6a3]" />
        <span className="ml-auto flex items-center gap-[6px] text-[#e6e6e6]">
          <button aria-label="Hide Plane">
            <EyeIcon className="h-[14px] w-[14px]" />
          </button>
          <button aria-label="Disable Plane in renders">
            <CameraIcon className="h-[14px] w-[14px]" />
          </button>
        </span>
      </li>
    </ul>
  </section>
);

const PROP_TABS = [
  {
    name: "Tool",
    color: "text-[#b8b8b8]",
    end: true,
    icon: (
      <Icon>
        <path d="M3.5 1.5V8" />
        <path d="M3.5 8C5 8.5 6 9.5 6 11.5S5 15 3.5 15 1 13.5 1 11.5 2 8.5 3.5 8Z" fill="currentColor" stroke="none" />
        <path d="M9 2V4C9 5.500 10 6.500 11 7V14H13V7C14 6.500 15 5.500 15 4V2" fill="currentColor" strokeWidth=".8" />
        <path d="M12 1V4" stroke="#1d1d1d" strokeWidth="2" />
      </Icon>
    ),
  },
  {
    name: "Render",
    color: "text-[#b8b8b8]",
    icon: (
      <Icon strokeWidth="1.5" strokeLinejoin="miter">
        <path d="M1.5 4.5H4V2H8V4.5H14.5V14H1.5ZM11 4.5V14M4 7.5H9M4 9.5H9M4 11.5H9" />
      </Icon>
    ),
  },
  {
    name: "Output",
    color: "text-[#b8b8b8]",
    icon: (
      <Icon stroke="none" fill="currentColor">
        <path d="M1 1.5H15V7H12.5V5H3.5V7H1ZM4 6H12V15H4Z" />
        <path d="M5 13.5 8 8.5 9.5 11 10.5 10 11.5 13.5Z" fill="#333" />
      </Icon>
    ),
  },
  { name: "View Layer", color: "text-[#b8b8b8]", icon: <ImagesIcon /> },
  { name: "Scene", color: "text-[#b8b8b8]", icon: <SceneIcon /> },
  {
    name: "World",
    color: "text-[#b8525c]",
    end: true,
    icon: (
      <Icon>
        <circle cx="8" cy="8" r="6.5" />
        <path d="M3 4 6 2 9 4 7 6 7 8 5 8 2.5 6ZM8 8.5H12L13 10 10 14 8.5 12Z" fill="currentColor" />
        <path d="M14.5 1.5 13 3M3 13 1.5 14.5" />
      </Icon>
    ),
  },
  { name: "Collection", color: "text-[#dcdcdc]", end: true, icon: <BoxIcon /> },
  { name: "Object", color: "text-[#c97f46]", icon: <ObjectIcon frame="#8a5c38" /> },
  { name: "Modifiers", color: "text-[#5b84d6]", icon: <WrenchIcon solid /> },
  {
    name: "Particles",
    color: "text-[#5b84d6]",
    icon: (
      <Icon>
        <path d="M4 3.5H12M4 3.5V12M4 3.5 13 13" />
        <circle cx="3.5" cy="3.5" r="2.5" fill="currentColor" stroke="none" />
        <circle cx="13.5" cy="3.5" r="1.5" fill="currentColor" stroke="none" />
        <circle cx="3.5" cy="13.5" r="1.5" fill="currentColor" stroke="none" />
        <circle cx="13.5" cy="13.5" r="1.8" fill="currentColor" stroke="none" />
      </Icon>
    ),
  },
  {
    name: "Physics",
    color: "text-[#5b84d6]",
    icon: (
      <Icon>
        <circle cx="8" cy="8.5" r="3" fill="currentColor" stroke="none" />
        <path d="M10 2.3A6.5 6.5 0 1 0 14.5 8.5" />
        <circle cx="13.5" cy="3" r="1.7" fill="currentColor" stroke="none" />
      </Icon>
    ),
  },
  {
    name: "Constraints",
    color: "text-[#5b84d6]",
    icon: (
      <Icon strokeWidth="1.3">
        <circle cx="6" cy="9.5" r="2.2" />
        <path d="M2 7C4 4 9 3 12.5 1.2 15 1 15 3 14.5 4 13 6.5 12 9 10.5 12 8 15.5 3.5 15 2 12.5 1 11 1 9 2 7Z" />
        <circle cx="12.5" cy="3.5" r=".8" fill="currentColor" stroke="none" />
      </Icon>
    ),
  },
  { name: "Data", color: "text-[#00d6a3]", active: true, icon: <MeshIcon /> },
  {
    name: "Material",
    color: "text-[#b8525c]",
    end: true,
    icon: (
      <Icon>
        <circle cx="8" cy="8" r="6.5" />
        <path d="M8 1.5A6.5 6.5 0 0 1 8 14.5L8 8 3 12 1.5 8 8 8Z" fill="currentColor" />
      </Icon>
    ),
  },
  {
    name: "Texture",
    color: "text-[#b8525c]",
    end: true,
    icon: (
      <Icon strokeLinejoin="miter">
        <rect x="1.5" y="1.5" width="13" height="13" />
        <path
          d="M2 2H5V5H2ZM8 2H11V5H8ZM5 5H8V8H5ZM11 5H14V8H11ZM2 8H5V11H2ZM8 8H11V11H8ZM5 11H8V14H5ZM11 11H14V14H11Z"
          fill="currentColor"
          stroke="none"
        />
      </Icon>
    ),
  },
];

const Panel = ({ title, children }) => (
  <section className="rounded bg-[#3d3d3d]">
    <h2 className="flex h-[25px] items-center pr-[6px] pl-2">
      <button aria-expanded={!!children} className="flex items-center gap-[5px]">
        <Chevron className={children ? "h-[9px] w-[9px] text-[#b0b0b0]" : "h-[9px] w-[9px] -rotate-90 text-[#b0b0b0]"} />
        {title}
      </button>
      <Grip className="ml-auto text-[#8a8a8a]" />
    </h2>
    {children}
  </section>
);

const ListBox = ({ className }) => (
  <div className={`flex flex-1 items-end rounded bg-[#2c2c2c] pb-[5px] pl-[10px] ${className}`}>
    <svg viewBox="0 0 8 8" className="h-2 w-2" aria-hidden>
      <path d="M1 1.5V6.5L7 4Z" fill="#c8c8c8" />
    </svg>
    <div className="flex flex-1 justify-center pb-px">
      <Grip className="text-[#d0d0d0]" />
    </div>
  </div>
);

const ListButtons = ({ clipped }) => (
  <div className="ml-[10px] flex w-[18px] flex-col">
    <button
      aria-label="Add item"
      className={
        clipped
          ? "flex h-[7px] items-end justify-center overflow-hidden bg-[#545454]"
          : "flex h-[18px] items-center justify-center rounded-t bg-[#545454]"
      }
    >
      <PlusIcon />
    </button>
    <button aria-label="Remove item" className="mt-[2px] flex h-[18px] items-center justify-center rounded-b bg-[#464646] text-[#8a8a8a]">
      <Icon>
        <path d="M3.5 8H12.5" />
      </Icon>
    </button>
    <button aria-label="Specials" className="mt-2 flex h-[18px] items-center justify-center rounded bg-[#282828]">
      <Chevron className="h-[10px] w-[10px]" />
    </button>
  </div>
);

const DATA_OPS = [
  { label: "Clear Sculpt Mask Data", disabled: true, remove: true },
  { label: "Clear Skin Data", disabled: true, remove: true },
  { label: "Clear Custom Split Normals Data", remove: true },
  { label: "Add Edge Bevel Weight" },
  { label: "Add Vertex Bevel Weight" },
  { label: "Add Edge Crease" },
  { label: "Add Vertex Crease" },
];

const Annotations = () => (
  <svg className="pointer-events-none absolute top-0 left-0 z-10 h-full w-full overflow-visible" aria-hidden>
    <g fill="none" stroke="#ffe600" strokeWidth="6" strokeLinecap="round" strokeLinejoin="round">
      <path d="M49 415C62 410 80 405 104 403M84 398 104 403 86 412" />
      <path d="M-3 519 45 557M36 540 45 557 26 557" />
    </g>
    <g fill="#ffe600" fontSize="46" className="font-['Lato',sans-serif] font-bold">
      <text x="-17" y="438">
        2<tspan x="22">.</tspan>
      </text>
      <text x="-56" y="522">
        3<tspan x="-29">.</tspan>
      </text>
    </g>
  </svg>
);

const Properties = () => (
  <section className="relative flex min-h-0 flex-1 flex-col text-[#e6e6e6]">
    <div className="flex h-[25px] shrink-0 items-center rounded-t-lg bg-[#303030] pr-[7px] pl-2">
      <MenuButton label="Editor type" className="w-8 !pl-1">
        <Icon stroke="none" fill="currentColor">
          <rect x="1" y="1" width="14" height="6" rx="2" />
          <rect x="1" y="9" width="14" height="6" rx="2" />
          <rect x="8" y="2.5" width="5.5" height="3" rx="1" fill="#333" />
          <circle cx="11.5" cy="12" r="1.6" fill="#333" />
        </Icon>
      </MenuButton>
      <div className="flex flex-1 justify-center pr-[11px]">
        <SearchBox label="Search properties" />
      </div>
      <button aria-label="Options" className={`${boxClass} w-5 justify-center`}>
        <Chevron />
      </button>
    </div>
    <div className="flex min-h-0 flex-1 overflow-hidden rounded-b-lg bg-[#303030]">
      <nav className="flex w-7 shrink-0 flex-col bg-[#1d1d1d] pt-2">
        {PROP_TABS.map((tab) => (
          <div key={tab.name} className={tab.end ? "mb-2 border-b border-[#191919]" : ""}>
            <button
              aria-label={tab.name}
              className={`ml-[2px] flex w-[26px] items-center justify-center rounded-l ${tab.end ? "h-[27px]" : "h-7"} ${
                tab.active ? "bg-[#303030]" : ""
              } ${tab.color}`}
            >
              {tab.icon}
            </button>
          </div>
        ))}
      </nav>
      <div className="flex min-w-0 flex-1 flex-col gap-[2px] pr-px pl-2">
        <section className="flex rounded-b bg-[#3d3d3d] pr-[9px] pb-[9px] pl-[9px]">
          <ListBox className="h-[68px] rounded-t-none" />
          <ListButtons clipped />
        </section>
        <Panel title="Shape Keys">
          <div className="flex px-[9px] pt-[9px]">
            <ListBox className="h-[78px]" />
            <ListButtons />
          </div>
          <div className="flex h-[34px] items-center gap-1 pl-[9px]">
            <Checkbox id="rest-position" />
            <label htmlFor="rest-position">Add Rest Position</label>
          </div>
        </Panel>
        <Panel title="UV Maps" />
        <Panel title="Color Attributes" />
        <Panel title="Face Maps" />
        <Panel title="Attributes" />
        <Panel title="Normals">
          <div className="flex h-9 items-start pt-[9px] pr-[15px]">
            <label htmlFor="auto-smooth" className="w-[138px] text-right leading-[18px]">
              Auto Smooth
            </label>
            <span className="ml-[9px] flex h-[18px] items-center">
              <Checkbox id="auto-smooth" checked className="h-3 w-3 bg-[#4772b3] text-white" />
            </span>
            <input
              aria-label="Auto smooth angle"
              defaultValue="180°"
              disabled
              className="ml-2 h-[18px] min-w-0 flex-1 rounded bg-[#464646] text-center text-[#8a8a8a]"
            />
            <span className="mt-[7px] ml-[9px] h-1 w-1 rounded-full bg-[#777777]" />
          </div>
        </Panel>
        <Panel title="Texture Space" />
        <Panel title="Remesh" />
        <Panel title="Geometry Data">
          <div className="flex flex-col gap-1 p-[9px]">
            {DATA_OPS.map((op) => (
              <button
                key={op.label}
                disabled={op.disabled}
                className="flex h-[18px] items-center rounded bg-[#545454] pl-1 disabled:bg-[#464646] disabled:text-[#858585]"
              >
                {op.remove ? <CloseIcon className="h-[15px] w-[15px]" /> : <PlusIcon className="h-[15px] w-[15px]" />}
                <span className="flex-1">{op.label}</span>
              </button>
            ))}
          </div>
        </Panel>
        <Panel title="Custom Properties" />
      </div>
      <div className="flex w-[7px] shrink-0 justify-center pt-[108px] pb-2">
        <div className="w-[3px] rounded bg-[#454545]" />
      </div>
    </div>
    <Annotations />
  </section>
);

const StatusBar = () => (
  <footer className="shrink-0 bg-[#181818] text-[#989898]">
    <div className="flex h-[22px] items-center bg-[#1d1d1d] pr-2 pl-[43px]">
      <svg viewBox="0 0 11 15" className="mr-[10px] h-[15px] w-[11px]" fill="none" stroke="currentColor" aria-hidden>
        <rect x=".5" y=".5" width="10" height="14" rx="3" />
        <rect x="4" y="3" width="3" height="5" fill="currentColor" stroke="none" />
      </svg>
      <span className="w-[190px]">Rotate View</span>
      <svg viewBox="0 0 11 15" className="mr-[10px] h-[15px] w-[11px]" fill="none" stroke="currentColor" aria-hidden>
        <path d="M10.5 8V12A2.5 2.5 0 0 1 8 14.5H3A2.5 2.5 0 0 1 .5 12V3A2.5 2.5 0 0 1 3 .5H5" />
        <path d="M6 0H8.5A2.5 2.5 0 0 1 11 2.5V7H6Z" fill="currentColor" stroke="none" />
      </svg>
      <span>Object Context Menu</span>
      <span className="ml-auto">VRAM: 6.7/8.0 GiB | 3.5.0</span>
    </div>
    <div className="flex h-[2px] gap-[3px] bg-black">
      <div className="w-[114px] bg-[#5a5a5a]" />
      <div className="w-9 bg-[#333333]" />
    </div>
  </footer>
);

export default function App() {
  return (
    <div className="flex h-screen flex-col overflow-hidden bg-[#181818] font-['DejaVu_Sans_Condensed','DejaVu_Sans',sans-serif] text-[11px] leading-[17px] text-[#e6e6e6] select-none">
      <TopBar />
      <main className="flex min-h-0 flex-1 gap-[3px] pr-px">
        <div className="flex min-w-0 flex-1 flex-col gap-[3px]">
          <div className="flex min-h-0 flex-[512] gap-[3px]">
            <Spreadsheet />
            <Viewport />
          </div>
          <NodeEditor />
        </div>
        <aside className="flex w-[413px] shrink-0 flex-col gap-[3px]">
          <Outliner />
          <Properties />
        </aside>
      </main>
      <StatusBar />
    </div>
  );
}
